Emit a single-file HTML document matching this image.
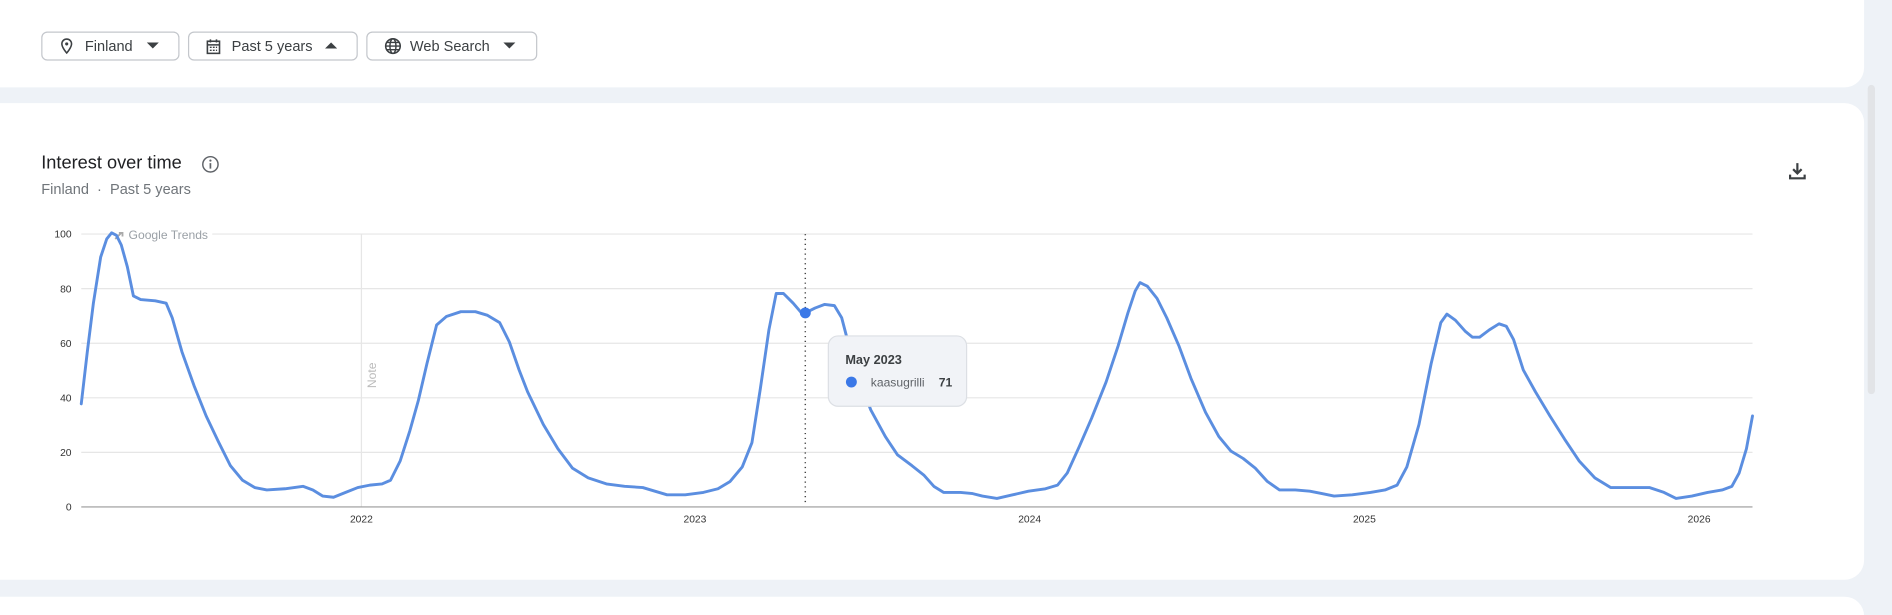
<!DOCTYPE html>
<html><head><meta charset="utf-8"><style>
html,body{margin:0;padding:0;background:#eef2f7;overflow:hidden;width:1892px;height:615px}
#w{width:1560px;height:507px;transform:scale(1.2128);transform-origin:0 0;position:relative;font-family:"Liberation Sans",sans-serif}
.card{position:absolute;background:#fff;border-radius:16px}
.btn{position:absolute;top:26px;height:24px;border:1px solid #c4c7cc;border-radius:5px;background:#fff;font-size:12px;color:#3c4043;display:flex;align-items:center;box-sizing:border-box}
.btn svg{position:absolute}
</style></head><body><div id="w">
<div class="card" style="left:-20px;top:-20px;width:1557px;height:92px"></div>
<div class="card" style="left:-20px;top:85px;width:1557px;height:393px"></div>
<div class="card" style="left:-20px;top:492px;width:1557px;height:60px"></div>
<div style="position:absolute;left:1540px;top:70px;width:6px;height:255px;background:#e2e4e7;border-radius:3px"></div>

<div class="btn" style="left:34px;width:114px">
<svg style="left:14px" width="12" height="14" viewBox="0 0 12 14"><path d="M6 1.2a4 4 0 0 0-4 4c0 3 4 7.5 4 7.5s4-4.5 4-7.5a4 4 0 0 0-4-4z" fill="none" stroke="#3c4043" stroke-width="1.3"/><circle cx="6" cy="5.2" r="1.3" fill="#3c4043"/></svg>
<span style="position:absolute;left:35px">Finland</span>
<svg style="left:86px" width="10" height="6"><path d="M0 0h10L5 5z" fill="#3c4043"/></svg></div>
<div class="btn" style="left:155px;width:140px">
<svg style="left:14px" width="12" height="13" viewBox="0 0 12 13"><rect x="1" y="2" width="10" height="10" fill="none" stroke="#3c4043" stroke-width="1.3"/><path d="M1 5h10M3.5 0.5v2.5M8.5 0.5v2.5" stroke="#3c4043" stroke-width="1.3"/><path d="M3 7h1.5M5.5 7H7M8 7h1M3 9.5h1.5M5.5 9.5H7M8 9.5h1" stroke="#3c4043" stroke-width="1.2"/></svg>
<span style="position:absolute;left:35px">Past 5 years</span>
<svg style="left:112px" width="10" height="6"><path d="M0 5h10L5 0z" fill="#3c4043"/></svg></div>
<div class="btn" style="left:302px;width:141px">
<svg style="left:14px" width="14" height="14" viewBox="0 0 14 14"><circle cx="7" cy="7" r="6" fill="none" stroke="#3c4043" stroke-width="1.3"/><ellipse cx="7" cy="7" rx="2.5" ry="6" fill="none" stroke="#3c4043" stroke-width="1.2"/><path d="M1 7h12M2 4h10M2 10h10" stroke="#3c4043" stroke-width="1.1"/></svg>
<span style="position:absolute;left:35px">Web Search</span>
<svg style="left:112px" width="10" height="6"><path d="M0 0h10L5 5z" fill="#3c4043"/></svg></div>

<div style="position:absolute;left:34px;top:126px;font-size:15px;color:#202124">Interest over time</div>
<svg style="position:absolute;left:166px;top:128px" width="15" height="15"><circle cx="7.5" cy="7.5" r="6.3" fill="none" stroke="#5f6368" stroke-width="1.2"/><path d="M7.5 6.5v4.5" stroke="#5f6368" stroke-width="1.4"/><circle cx="7.5" cy="4.4" r=".9" fill="#5f6368"/></svg>
<div style="position:absolute;left:34px;top:149px;font-size:12px;color:#70757a">Finland &nbsp;·&nbsp; Past 5 years</div>
<svg style="position:absolute;left:1474px;top:133px" width="16" height="16" viewBox="0 0 16 16"><path d="M8 1.5v8M4.5 6.5 8 10l3.5-3.5" fill="none" stroke="#3c4043" stroke-width="1.8"/><path d="M2 11v3h12v-3" fill="none" stroke="#3c4043" stroke-width="1.8"/></svg>

<svg style="position:absolute;left:0;top:0" width="1560" height="507" font-family="Liberation Sans,sans-serif">
<g stroke="#e6e6e6" stroke-width="1">
<line x1="67" y1="193" x2="1445" y2="193"/><line x1="67" y1="238" x2="1445" y2="238"/><line x1="67" y1="283" x2="1445" y2="283"/><line x1="67" y1="328" x2="1445" y2="328"/><line x1="67" y1="373" x2="1445" y2="373"/>
<line x1="298" y1="193" x2="298" y2="418"/></g>
<line x1="67" y1="418" x2="1445" y2="418" stroke="#999" stroke-width="1"/>
<g font-size="8.5" fill="#333" text-anchor="end"><text x="59" y="196">100</text><text x="59" y="241">80</text><text x="59" y="286">60</text><text x="59" y="331">40</text><text x="59" y="376">20</text><text x="59" y="421">0</text></g>
<g font-size="8.5" fill="#333" text-anchor="middle"><text x="298" y="431">2022</text><text x="573" y="431">2023</text><text x="849" y="431">2024</text><text x="1125" y="431">2025</text><text x="1401" y="431">2026</text></g>
<rect x="90" y="186" width="85" height="14" fill="#fff"/>
<path d="M95 197l5-5M98 192h3v3" stroke="#aaa" stroke-width="1.5" fill="none"/>
<text x="106" y="197" font-size="10" fill="#9aa0a6">Google Trends</text>
<text x="310" y="320" font-size="10" fill="#bbb" transform="rotate(-90 310 320)">Note</text>
<line x1="664" y1="193" x2="664" y2="414" stroke="#444" stroke-width="1.2" stroke-dasharray="1 3"/>
<polyline fill="none" stroke="#5b8ee0" stroke-width="2.4" stroke-linejoin="round" stroke-linecap="round" points="67,333 72,290 77,250 83,212 88,197 92,192 96,194 100,202 105,220 110,244 116,247 128,248 137,250 142,262 150,290 160,318 170,343 180,364 190,384 200,396 210,402 220,404 235,403 250,401 258,404 266,409 275,410 285,406 295,402 305,400 315,399 322,396 330,380 338,355 345,330 352,300 360,268 368,261 380,257 392,257 402,260 412,266 420,282 428,305 435,323 448,350 460,370 472,386 485,394 500,399 515,401 530,402 540,405 550,408 565,408 580,406 592,403 602,397 612,385 620,365 627,320 634,272 640,242 646,242 654,250 660,257 664,258 672,254 680,251 688,252 694,262 700,285 708,312 718,338 730,360 740,375 752,384 762,392 770,401 778,406 792,406 802,407 810,409 822,411 835,408 848,405 862,403 872,400 880,390 890,368 900,345 912,315 922,285 930,258 936,240 940,233 946,236 954,246 962,262 972,285 982,312 994,340 1005,360 1015,372 1025,378 1035,386 1045,397 1055,404 1068,404 1080,405 1090,407 1100,409 1115,408 1130,406 1142,404 1152,400 1160,385 1170,350 1180,300 1188,266 1193,259 1200,264 1208,273 1214,278 1220,278 1228,272 1236,267 1242,269 1248,280 1256,305 1266,323 1278,343 1290,362 1302,380 1315,394 1328,402 1345,402 1360,402 1372,406 1382,411 1395,409 1408,406 1420,404 1428,401 1434,390 1440,370 1445,343"/>
<circle cx="664" cy="258" r="4.5" fill="#3b78e7"/>
<rect x="683" y="277" width="114" height="58" rx="8" fill="#f1f3f7" stroke="#dcdfe4" stroke-width="1"/>
<text x="697" y="300" font-size="10.5" font-weight="bold" fill="#3c4043">May 2023</text>
<circle cx="702" cy="315" r="4.5" fill="#3b78e7"/>
<text x="718" y="318.5" font-size="10" fill="#5f6368">kaasugrilli</text>
<text x="774" y="318.5" font-size="10" font-weight="bold" fill="#3c4043">71</text>
</svg>
</div></body></html>
